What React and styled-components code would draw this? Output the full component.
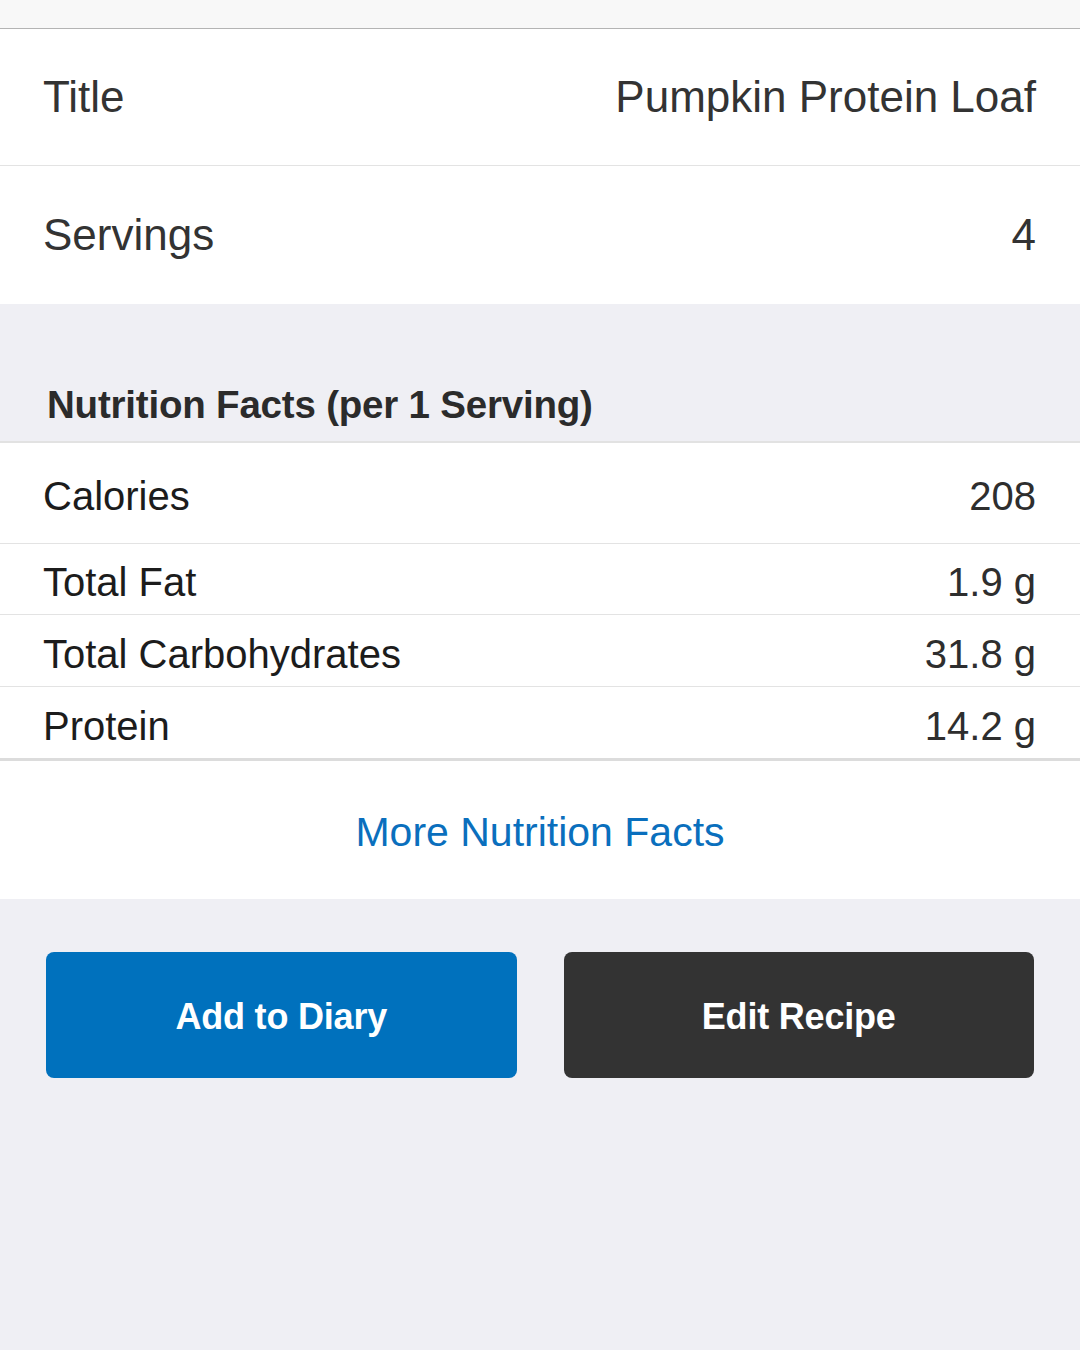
import React from "react";
import styled, { createGlobalStyle } from "styled-components";

const Global = createGlobalStyle`
  html, body { margin: 0; padding: 0; background: #efeff4; }
  body { font-family: "Liberation Sans", Arial, sans-serif; }
  * { box-sizing: border-box; }
`;

const Page = styled.div`
  width: 1080px;
  min-height: 1350px;
  background: #efeff4;
  display: flex;
  flex-direction: column;
`;

const TopBar = styled.div`
  height: 29px;
  background: #f8f8f8;
  border-bottom: 1px solid #b4b4b4;
`;

const Group = styled.div`
  background: #fff;
  display: flex;
  flex-direction: column;
  border-bottom: ${(p) => p.$bottom || "none"};
`;

const Row = styled.div`
  height: ${(p) => p.$h}px;
  display: flex;
  align-items: center;
  justify-content: space-between;
  padding: ${(p) => p.$pt || 0}px 44px 0 43px;
  border-bottom: ${(p) => (p.$divider ? "1px solid #e3e3e3" : "none")};
  font-size: ${(p) => p.$size}px;
  line-height: 1;
`;

const Label = styled.span`
  color: ${(p) => p.$color || "#1c1c1c"};
  font-weight: 400;
`;

const Value = styled.span`
  color: ${(p) => p.$color || "#2e2e2e"};
  font-weight: 400;
`;

const SectionHead = styled.div`
  height: 139px;
  display: flex;
  align-items: flex-end;
  padding: 0 0 17px 47px;
  border-bottom: 2px solid #e2e2e2;
  font-size: 38.5px;
  font-weight: 700;
  color: #2b2b2b;
  line-height: 1;
  letter-spacing: -0.2px;
`;

const MoreLink = styled.div`
  height: 138px;
  display: flex;
  align-items: center;
  justify-content: center;
  padding-top: 4px;
  font-size: 41px;
  color: #0a6fbd;
  background: #fff;
`;

const Buttons = styled.div`
  display: grid;
  grid-template-columns: 1fr 1fr;
  gap: 47px;
  padding: 53px 46px 0 46px;
`;

const Button = styled.button`
  height: 126px;
  border: none;
  border-radius: 8px;
  background: ${(p) => (p.$dark ? "#333333" : "#0071bd")};
  color: #fff;
  font-family: "Liberation Sans", Arial, sans-serif;
  font-size: 36px;
  font-weight: 700;
  letter-spacing: -0.2px;
  padding: 4px 0 0 0;
`;

export default function App() {
  return (
    <Page>
      <Global />
      <TopBar />
      <Group>
        <Row $h={137} $size={44} $divider>
          <Label $color="#333">Title</Label>
          <Value $color="#333">Pumpkin Protein Loaf</Value>
        </Row>
        <Row $h={138} $size={44}>
          <Label $color="#333">Servings</Label>
          <Value $color="#333">4</Value>
        </Row>
      </Group>
      <SectionHead>Nutrition Facts (per 1 Serving)</SectionHead>
      <Group $bottom="3px solid #dcdcdc">
        <Row $h={101} $size={40} $pt={6} $divider>
          <Label>Calories</Label>
          <Value>208</Value>
        </Row>
        <Row $h={71} $size={40} $pt={6} $divider>
          <Label>Total Fat</Label>
          <Value>1.9 g</Value>
        </Row>
        <Row $h={72} $size={40} $pt={6} $divider>
          <Label>Total Carbohydrates</Label>
          <Value>31.8 g</Value>
        </Row>
        <Row $h={71} $size={40} $pt={6}>
          <Label>Protein</Label>
          <Value>14.2 g</Value>
        </Row>
      </Group>
      <MoreLink>More Nutrition Facts</MoreLink>
      <Buttons>
        <Button>Add to Diary</Button>
        <Button $dark>Edit Recipe</Button>
      </Buttons>
    </Page>
  );
}
